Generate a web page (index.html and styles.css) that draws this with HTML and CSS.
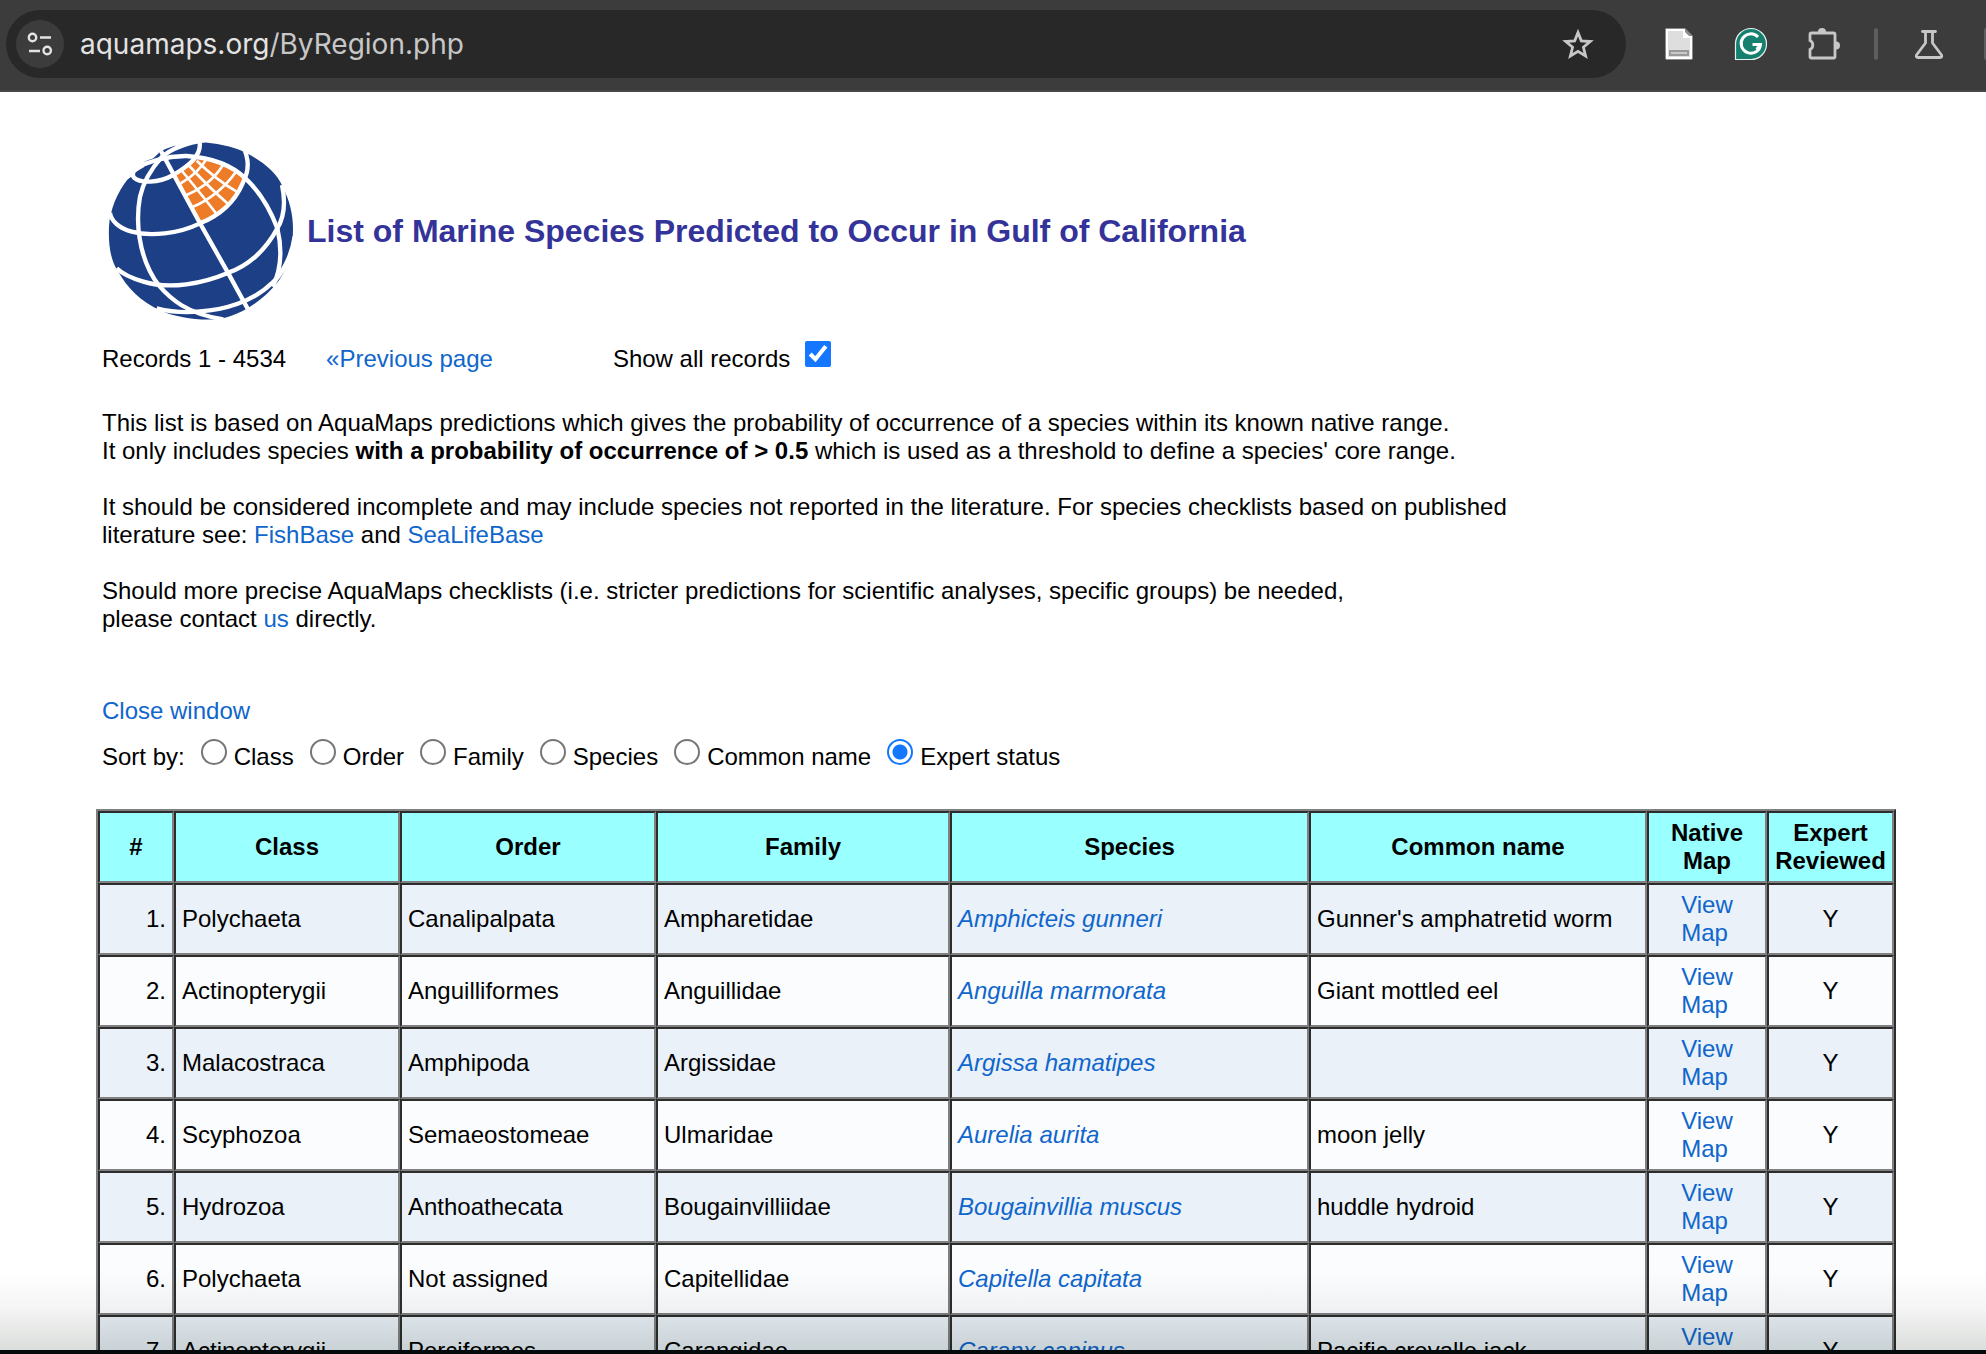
FILE: index.html
```html
<!DOCTYPE html>
<html lang="en">
<head>
<meta charset="utf-8">
<title>List of Marine Species</title>
<link rel="stylesheet" href="styles.css">
</head>
<body>
<header class="toolbar">
  <div class="omnibox">
    <button class="site-info" aria-label="Site information">
      <svg width="28" height="28" viewBox="0 0 28 28" fill="none" stroke="#e3e3e3" stroke-width="2.4"><circle cx="6.5" cy="7.5" r="3.7"/><path d="M14 7.5h11M3 21h11"/><circle cx="21.200" cy="20.500" r="3.700"/></svg>
    </button>
    <div class="url"><span class="host">aquamaps.org</span>/ByRegion.php</div>
    <button class="star" aria-label="Bookmark">
      <svg width="32" height="32" viewBox="0 0 32 32" fill="none" stroke="#c7c7c7" stroke-width="2.800"><path d="M16 4.500l3.300 8.300 9 .7-6.900 5.800 2.200 8.700-7.600-4.700L8.400 28l2.200-8.700-6.900-5.800 9-.7z"/></svg>
    </button>
  </div>
  <nav class="extensions">
    <button aria-label="Document extension">
      <svg width="32" height="34" viewBox="0 0 32 34"><path d="M3 1h19l8 8v22q0 2-2 2H4q-2 0-2-2V2q0-1 1-1z" fill="#8b8b8b"/><path d="M4 3h17v7h7v21H4z" fill="#dedede" stroke="#fff" stroke-width="2"/><path d="M20 3l8 8h-8z" fill="#fff"/><path d="M6 23h20v6H6z" fill="#999"/><path d="M8 25h16v2H8z" fill="#c9c9c9"/></svg>
    </button>
    <button aria-label="Grammar extension">
      <svg width="34" height="34" viewBox="0 0 34 34"><path d="M1.500 32.500V17A15.500 15.500 0 1 1 17 32.500z" fill="#15806e" stroke="#e6f2ef" stroke-width="1.200"/><path d="M24 10a9.700 9.700 0 1 0 2.500 7.500H18.500M26.500 17.500l-3.800 5" fill="none" stroke="#fff" stroke-width="3"/></svg>
    </button>
    <button aria-label="Extensions">
      <svg width="34" height="34" viewBox="0 0 34 34"><path d="M4 7.500q0-1.500 1.500-1.500h22q1.500 0 1.500 1.500v22q0 1.500-1.500 1.500h-22Q4 31 4 29.500v-7a5 5 0 0 0 0-9z" fill="none" stroke="#c7c7c7" stroke-width="2.800"/><path d="M12 5a4 4 0 0 1 8 0zM30 14.500a4 4 0 0 1 0 8z" fill="#c7c7c7"/></svg>
    </button>
    <span class="divider"></span>
    <button aria-label="Experiments">
      <svg width="32" height="34" viewBox="0 0 32 34" fill="none" stroke="#c7c7c7" stroke-width="2.800" stroke-linecap="round" stroke-linejoin="round"><path d="M9.500 4.500h13M12.500 5v11L3.500 28q-1 2.500 1.500 2.500h22q2.500 0 1.500-2.500l-9-12V5"/></svg>
    </button>
    <span class="divider last"></span>
  </nav>
</header>
<main class="page">
  <div class="masthead">
    <svg class="logo" width="188" height="182" viewBox="51 60 564 546" role="img" aria-label="AquaMaps">
      <path fill="#1c3f86" d="M330 67C375 69 425 78 468 98C515 123 560 155 578 200C598 240 609 280 609 325C609 380 600 440 560 490C520 540 450 590 380 598C320 602 260 592 215 573C150 545 110 500 85 455C60 420 55 370 57 320C60 270 80 220 115 175C155 120 230 67 330 67Z"/>
      <path fill="#ee7b28" d="M255 162L320 118L380 122L462 175Q440 270 330 306Z"/>
      <g fill="none" stroke="#fff" stroke-width="8">
        <path d="M276 153Q340 230 382 285M298 138Q360 205 412 250M320 122Q380 180 440 215"/>
        <path d="M272 190Q325 160 350 116M288 226Q370 190 403 127M306 262Q390 225 440 152"/>
      </g>
      <g fill="none" stroke="#fff" stroke-width="13">
        <path d="M208 84L330 310L415 460L478 575"/>
        <path d="M328 60C338 105 300 135 250 165C205 190 150 190 132 173C120 155 140 146 160 135"/>
        <path d="M120 152C180 120 230 107 290 108C350 112 420 130 467 176C520 225 545 280 562 325C575 380 578 440 548 500"/>
        <path d="M345 60C280 70 240 90 216 110C185 145 160 185 150 230C140 285 144 325 149 355C160 425 190 475 207 497C240 535 290 582 400 598"/>
        <path d="M464 90C482 135 470 165 458 190C430 255 380 290 330 310C265 342 180 350 125 335C85 325 62 300 60 278"/>
        <path d="M576 195C590 260 577 300 562 325C525 395 470 440 415 458C340 490 240 510 160 485C125 475 100 465 80 445"/>
        <path d="M614 350C605 415 570 470 545 490C490 545 400 570 330 574C280 580 240 575 200 565"/>
      </g>
      <path fill="#fff" d="M100 145L130 160L122 172L95 190ZM150 130L180 103L210 96L190 115ZM255 76L325 60L325 66Q285 71 262 84Z"/>
    </svg>
    <h1>List of Marine Species Predicted to Occur in Gulf of California</h1>
  </div>
  <div class="records">
    <span>Records 1 - 4534</span>
    <a class="previous" href="#">«Previous page</a>
    <label class="show-all">Show all records <input type="checkbox" checked></label>
  </div>
  <div class="intro">
    <p>This list is based on AquaMaps predictions which gives the probability of occurrence of a species within its known native range.<br>It only includes species <b>with a probability of occurrence of &gt; 0.5</b> which is used as a threshold to define a species' core range.</p>
    <p>It should be considered incomplete and may include species not reported in the literature. For species checklists based on published<br>literature see: <a href="#">FishBase</a> and <a href="#">SeaLifeBase</a></p>
    <p>Should more precise AquaMaps checklists (i.e. stricter predictions for scientific analyses, specific groups) be needed,<br>please contact <a href="#">us</a> directly.</p>
  </div>
  <div class="close"><a href="#">Close window</a></div>
  <form class="sort">
    <span>Sort by:</span>
    <label><input type="radio" name="sort">Class</label>
    <label><input type="radio" name="sort">Order</label>
    <label><input type="radio" name="sort">Family</label>
    <label><input type="radio" name="sort">Species</label>
    <label><input type="radio" name="sort">Common name</label>
    <label><input type="radio" name="sort" checked>Expert status</label>
  </form>
  <table class="species">
    <colgroup><col class="c-num"><col class="c-class"><col class="c-order"><col class="c-family"><col class="c-species"><col><col class="c-map"><col class="c-expert"></colgroup>
    <thead>
      <tr><th>#</th><th>Class</th><th>Order</th><th>Family</th><th>Species</th><th>Common name</th><th>Native Map</th><th>Expert Reviewed</th></tr>
    </thead>
    <tbody>
      <tr><td>1.</td><td>Polychaeta</td><td>Canalipalpata</td><td>Ampharetidae</td><td><a href="#">Amphicteis gunneri</a></td><td>Gunner's amphatretid worm</td><td><a href="#">View<br>Map</a></td><td>Y</td></tr>
      <tr><td>2.</td><td>Actinopterygii</td><td>Anguilliformes</td><td>Anguillidae</td><td><a href="#">Anguilla marmorata</a></td><td>Giant mottled eel</td><td><a href="#">View<br>Map</a></td><td>Y</td></tr>
      <tr><td>3.</td><td>Malacostraca</td><td>Amphipoda</td><td>Argissidae</td><td><a href="#">Argissa hamatipes</a></td><td></td><td><a href="#">View<br>Map</a></td><td>Y</td></tr>
      <tr><td>4.</td><td>Scyphozoa</td><td>Semaeostomeae</td><td>Ulmaridae</td><td><a href="#">Aurelia aurita</a></td><td>moon jelly</td><td><a href="#">View<br>Map</a></td><td>Y</td></tr>
      <tr><td>5.</td><td>Hydrozoa</td><td>Anthoathecata</td><td>Bougainvilliidae</td><td><a href="#">Bougainvillia muscus</a></td><td>huddle hydroid</td><td><a href="#">View<br>Map</a></td><td>Y</td></tr>
      <tr><td>6.</td><td>Polychaeta</td><td>Not assigned</td><td>Capitellidae</td><td><a href="#">Capitella capitata</a></td><td></td><td><a href="#">View<br>Map</a></td><td>Y</td></tr>
      <tr><td>7.</td><td>Actinopterygii</td><td>Perciformes</td><td>Carangidae</td><td><a href="#">Caranx caninus</a></td><td>Pacific crevalle jack</td><td><a href="#">View<br>Map</a></td><td>Y</td></tr>
    </tbody>
  </table>
  <div class="shade"></div>
</main>
<footer class="edge"></footer>
</body>
</html>
```
FILE: styles.css
```css
* { box-sizing: border-box; }
body {
  margin: 0;
  height: 100vh;
  overflow: hidden;
  display: flex;
  flex-direction: column;
  background: #fff;
  color: #000;
  font: 24px/28px "Liberation Sans", Arial, sans-serif;
}
button { border: 0; padding: 0; background: none; display: flex; align-items: center; justify-content: center; }
svg { display: block; flex: none; }
a { color: #0f66cc; text-decoration: none; }

.toolbar {
  flex: none;
  display: flex;
  align-items: center;
  height: 92px;
  padding: 0 0 2px 6px;
  background: #3c3c3c;
  border-bottom: 2px solid #474747;
}
.omnibox {
  flex: 1;
  display: flex;
  align-items: center;
  height: 68px;
  padding: 0 32px 0 10px;
  border-radius: 34px;
  background: #282828;
}
.site-info { width: 48px; height: 48px; border-radius: 50%; background: #3c3c3c; }
.url { flex: 1; margin-left: 16px; color: #c7c7c7; font: 28px/36px Inter, sans-serif; }
.host { color: #e3e3e3; }
.extensions { flex: none; display: flex; align-items: center; width: 360px; padding-left: 36px; }
.extensions button { flex: none; width: 34px; height: 34px; margin-right: 38px; }
.divider { flex: none; width: 4px; height: 32px; margin: 0 34px 0 -4px; border-radius: 2px; background: #5e5e5e; }
.divider.last { margin: 0; }

.page { flex: 1; min-height: 0; overflow: hidden; position: relative; padding: 48px 90px 0 96px; }
.masthead { display: flex; align-items: center; gap: 12px; padding-left: 11px; }
h1 { margin: 0; color: #339; font-size: 32px; line-height: 36px; }
.records { display: flex; align-items: baseline; margin-top: 19px; padding-left: 6px; }
.previous { margin-left: 40px; }
.show-all { margin-left: 120px; }
input { width: 26px; height: 26px; margin: 0; vertical-align: baseline; }
input[type="checkbox"] { margin-left: 8px; accent-color: #1577ff; }
input[type="radio"] { appearance: none; margin-right: 7px; border: 2px solid #767676; border-radius: 50%; background: #fff; }
input[type="radio"]:checked { border-color: #1577ff; background: radial-gradient(circle, #1577ff 7px, #fff 8px); }
.intro { padding: 36px 0 0 6px; }
.intro p { margin: 0 0 28px; }
.close { margin-top: 64px; padding-left: 6px; }
.sort { display: flex; align-items: baseline; gap: 16px; margin-top: 14px; padding-left: 6px; }

.species { width: 100%; margin-top: 38px; table-layout: fixed; border: 2px solid; border-color: #808080 #2c2c2c #2c2c2c #808080; border-spacing: 0; }
.species th, .species td { height: 72px; padding: 6px; border: 2px solid; border-color: #2c2c2c #808080 #808080 #2c2c2c; }
.species th { background: #9ff; }
.species td { background: #eaf1f8; }
.species tr:nth-child(even) td { background: #fbfcfe; }
.species td:first-child { text-align: right; }
.species td:nth-child(5) { font-style: italic; }
.species td:nth-child(7), .species td:nth-child(8) { text-align: center; }
.species td:nth-child(7) a { display: inline-block; text-align: left; vertical-align: top; }
.c-num { width: 76px; }
.c-class { width: 226px; }
.c-order { width: 256px; }
.c-family { width: 294px; }
.c-species { width: 359px; }
.c-map { width: 120px; }
.c-expert { width: 127px; }

.shade { position: absolute; left: 0; right: 0; bottom: 0; height: 80px; background: linear-gradient(transparent, rgba(0, 20, 5, .04) 45%, rgba(0, 20, 5, .14)); pointer-events: none; }
.edge { flex: none; height: 4px; background: #020a0d; }
```
